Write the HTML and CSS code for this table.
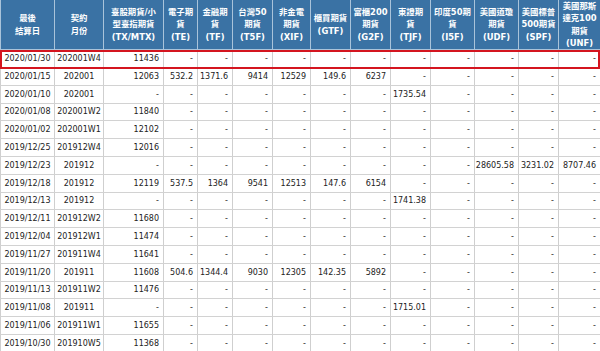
FILE: index.html
```html
<!DOCTYPE html>
<html>
<head>
<meta charset="utf-8">
<link rel="stylesheet" href="styles.css">
</head>
<body>
<div class="wrap">
<table class="grid">
<colgroup>
<col style="width:54px"><col style="width:49px"><col style="width:60px"><col style="width:34px"><col style="width:35px"><col style="width:40px"><col style="width:38px"><col style="width:40px"><col style="width:40px"><col style="width:40px"><col style="width:44px"><col style="width:44px"><col style="width:40px"><col style="width:42px">
</colgroup>
<thead>
<tr>
<th>最後<br>結算日</th>
<th>契約<br>月份</th>
<th>臺股期貨/小<br>型臺指期貨<br>(TX/MTX)</th>
<th>電子期<br>貨<br>(TE)</th>
<th>金融期<br>貨<br>(TF)</th>
<th>台灣50<br>期貨<br>(T5F)</th>
<th>非金電<br>期貨<br>(XIF)</th>
<th>櫃買期貨<br>(GTF)</th>
<th>富櫃200<br>期貨<br>(G2F)</th>
<th>東證期<br>貨<br>(TJF)</th>
<th>印度50期<br>貨<br>(I5F)</th>
<th>美國道瓊<br>期貨<br>(UDF)</th>
<th>美國標普<br>500期貨<br>(SPF)</th>
<th>美國那斯<br>達克100<br>期貨<br>(UNF)</th>
</tr>
</thead>
<tbody>
<tr><td class="c">2020/01/30</td><td class="c">202001W4</td><td>11436</td><td>-</td><td>-</td><td>-</td><td>-</td><td>-</td><td>-</td><td>-</td><td>-</td><td>-</td><td>-</td><td>-</td></tr>
<tr><td class="c">2020/01/15</td><td class="c">202001</td><td>12063</td><td>532.2</td><td>1371.6</td><td>9414</td><td>12529</td><td>149.6</td><td>6237</td><td>-</td><td>-</td><td>-</td><td>-</td><td>-</td></tr>
<tr><td class="c">2020/01/10</td><td class="c">202001</td><td>-</td><td>-</td><td>-</td><td>-</td><td>-</td><td>-</td><td>-</td><td>1735.54</td><td>-</td><td>-</td><td>-</td><td>-</td></tr>
<tr><td class="c">2020/01/08</td><td class="c">202001W2</td><td>11840</td><td>-</td><td>-</td><td>-</td><td>-</td><td>-</td><td>-</td><td>-</td><td>-</td><td>-</td><td>-</td><td>-</td></tr>
<tr><td class="c">2020/01/02</td><td class="c">202001W1</td><td>12102</td><td>-</td><td>-</td><td>-</td><td>-</td><td>-</td><td>-</td><td>-</td><td>-</td><td>-</td><td>-</td><td>-</td></tr>
<tr><td class="c">2019/12/25</td><td class="c">201912W4</td><td>12016</td><td>-</td><td>-</td><td>-</td><td>-</td><td>-</td><td>-</td><td>-</td><td>-</td><td>-</td><td>-</td><td>-</td></tr>
<tr><td class="c">2019/12/23</td><td class="c">201912</td><td>-</td><td>-</td><td>-</td><td>-</td><td>-</td><td>-</td><td>-</td><td>-</td><td>-</td><td>28605.58</td><td>3231.02</td><td>8707.46</td></tr>
<tr><td class="c">2019/12/18</td><td class="c">201912</td><td>12119</td><td>537.5</td><td>1364</td><td>9541</td><td>12513</td><td>147.6</td><td>6154</td><td>-</td><td>-</td><td>-</td><td>-</td><td>-</td></tr>
<tr><td class="c">2019/12/13</td><td class="c">201912</td><td>-</td><td>-</td><td>-</td><td>-</td><td>-</td><td>-</td><td>-</td><td>1741.38</td><td>-</td><td>-</td><td>-</td><td>-</td></tr>
<tr><td class="c">2019/12/11</td><td class="c">201912W2</td><td>11680</td><td>-</td><td>-</td><td>-</td><td>-</td><td>-</td><td>-</td><td>-</td><td>-</td><td>-</td><td>-</td><td>-</td></tr>
<tr><td class="c">2019/12/04</td><td class="c">201912W1</td><td>11474</td><td>-</td><td>-</td><td>-</td><td>-</td><td>-</td><td>-</td><td>-</td><td>-</td><td>-</td><td>-</td><td>-</td></tr>
<tr><td class="c">2019/11/27</td><td class="c">201911W4</td><td>11641</td><td>-</td><td>-</td><td>-</td><td>-</td><td>-</td><td>-</td><td>-</td><td>-</td><td>-</td><td>-</td><td>-</td></tr>
<tr><td class="c">2019/11/20</td><td class="c">201911</td><td>11608</td><td>504.6</td><td>1344.4</td><td>9030</td><td>12305</td><td>142.35</td><td>5892</td><td>-</td><td>-</td><td>-</td><td>-</td><td>-</td></tr>
<tr><td class="c">2019/11/13</td><td class="c">201911W2</td><td>11476</td><td>-</td><td>-</td><td>-</td><td>-</td><td>-</td><td>-</td><td>-</td><td>-</td><td>-</td><td>-</td><td>-</td></tr>
<tr><td class="c">2019/11/08</td><td class="c">201911</td><td>-</td><td>-</td><td>-</td><td>-</td><td>-</td><td>-</td><td>-</td><td>1715.01</td><td>-</td><td>-</td><td>-</td><td>-</td></tr>
<tr><td class="c">2019/11/06</td><td class="c">201911W1</td><td>11655</td><td>-</td><td>-</td><td>-</td><td>-</td><td>-</td><td>-</td><td>-</td><td>-</td><td>-</td><td>-</td><td>-</td></tr>
<tr><td class="c">2019/10/30</td><td class="c">201910W5</td><td>11368</td><td>-</td><td>-</td><td>-</td><td>-</td><td>-</td><td>-</td><td>-</td><td>-</td><td>-</td><td>-</td><td>-</td></tr>
</tbody>
</table>
<div class="hl"></div>
</div>
</body>
</html>
```

FILE: styles.css
```css
html, body {
  margin: 0;
  padding: 0;
  background: #ffffff;
}
.wrap {
  position: relative;
  width: 600px;
  height: 351px;
  overflow: hidden;
}
.grid {
  border-collapse: collapse;
  table-layout: fixed;
  width: 600px;
  font-family: "DejaVu Sans", Verdana, "Noto Sans CJK TC", sans-serif;
  font-size: 8px;
  color: #222;
}
.grid th {
  background: #3a72a4;
  color: #ffffff;
  font-family: "DejaVu Sans", "Noto Sans CJK TC", sans-serif;
  font-weight: bold;
  font-size: 8.4px;
  line-height: 12.3px;
  height: 49px;
  padding: 0;
  text-align: center;
  vertical-align: middle;
  border: 1px solid #a9c3da;
  border-top: none;
}
.grid td {
  height: 16.8px;
  padding: 0 4px 0 0;
  text-align: right;
  vertical-align: middle;
  border-left: 1px solid #cfcfcf;
  border-right: 1px solid #cfcfcf;
  border-bottom: 1px solid #d2d2d2;
  white-space: nowrap;
  overflow: hidden;
}
.grid td.c {
  text-align: center;
  padding: 0;
}
.hl {
  position: absolute;
  left: 0;
  top: 50px;
  width: 600px;
  height: 19px;
  box-sizing: border-box;
  border: 2px solid #d4151f;
}
```
